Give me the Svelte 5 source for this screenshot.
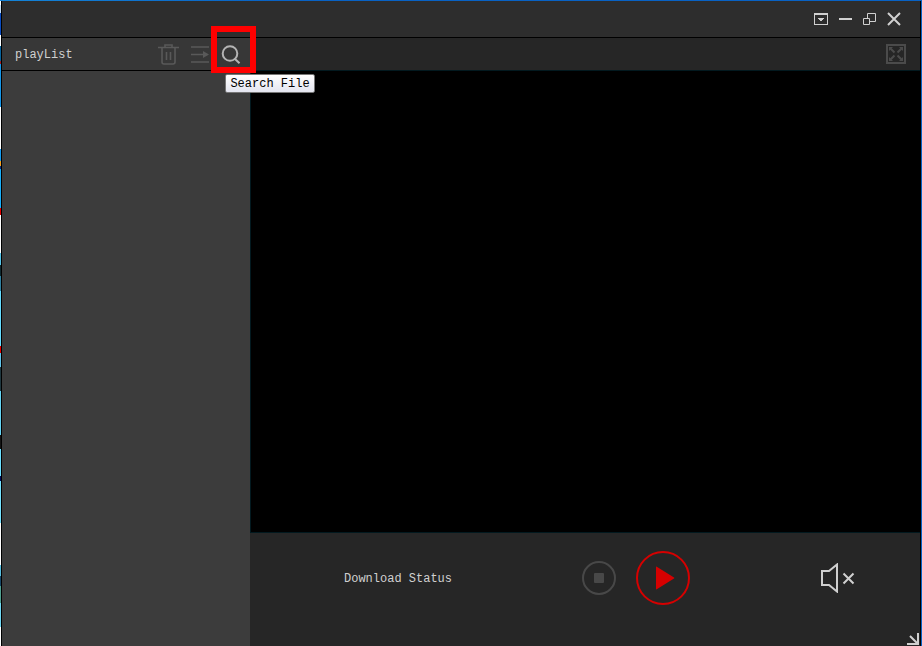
<script>
  let status = $state('Download Status');
  let files = $state([]);
</script>

<div class="desktop">
  <main class="window">
    <header class="titlebar">
      <button aria-label="Menu">
        <svg width="14" height="12" viewBox="0 0 14 12" shape-rendering="crispEdges">
          <path d="M.5 1v10.5h13V1" fill="none" stroke="#d0d0d0" />
          <path d="M0 0h14v2H0zM4 5h6v1H4zM5 6h4v1H5zM6 7h2v1H6z" fill="#d0d0d0" />
        </svg>
      </button>
      <button aria-label="Minimize">
        <svg width="13" height="12" viewBox="0 0 13 12"><path d="M0 5h13v2H0z" fill="#d0d0d0" /></svg>
      </button>
      <button aria-label="Restore">
        <svg width="13" height="12" viewBox="0 0 13 12" fill="none" stroke="#d0d0d0">
          <path d="M4.500 5V.5h8v8H7M.5 5.500h6v6h-6z" />
        </svg>
      </button>
      <button aria-label="Close">
        <svg width="14" height="14" viewBox="0 0 14 14"><path d="M1 1l12 12M13 1L1 13" stroke="#d0d0d0" stroke-width="2" /></svg>
      </button>
    </header>

    <div class="body">
      <aside class="sidebar">
        <div class="toolbar">
          <h1>playList</h1>
          <button aria-label="Delete">
            <svg width="21" height="22" viewBox="0 0 21 22" fill="none" stroke="#595959" stroke-width="1.600">
              <path d="M0 4.500h21M7 4V2h7v2M4 5v14q0 2 2 2h9q2 0 2-2V5M8.500 9v8M12.500 9v8" />
            </svg>
          </button>
          <button aria-label="Play order">
            <svg width="18" height="18" viewBox="0 0 18 18">
              <path d="M0 2h18M0 9.500h14M0 17h18" stroke="#595959" stroke-width="1.600" />
              <path d="M12 6l6 3.500-6 3.500z" fill="#595959" />
            </svg>
          </button>
          <div class="search">
            <button aria-label="Search File" aria-describedby="search-tip">
              <svg width="20" height="20" viewBox="0 0 20 20" fill="none" stroke="#b4b4b4" stroke-width="2">
                <circle cx="9" cy="9.500" r="7.300" /><path d="M13.500 14.500l5 4.700" />
              </svg>
            </button>
            <span class="marker"></span>
            <span class="tip" id="search-tip" role="tooltip">Search File</span>
          </div>
        </div>
        <ul class="files">
          {#each files as file}<li>{file}</li>{/each}
        </ul>
      </aside>

      <section class="player">
        <div class="toolbar viewbar">
          <button aria-label="Full screen">
            <svg width="20" height="20" viewBox="0 0 20 20" fill="none" stroke="#4b4b4b">
              <path d="M1 1h18v18H1z" stroke-width="2" />
              <path d="M4 4l4.500 4.500M16 4l-4.500 4.500M4 16l4.500-4.500M16 16l-4.500-4.500" stroke-width="2" />
              <path d="M3 3h4L3 7zM17 3v4l-4-4zM3 17v-4l4 4zM17 17h-4l4-4z" fill="#4b4b4b" stroke="none" />
            </svg>
          </button>
        </div>
        <div class="screen"></div>
        <footer class="controls">
          <span class="status">{status}</span>
          <div class="transport">
            <button aria-label="Stop">
              <svg width="34" height="34" viewBox="0 0 34 34">
                <circle cx="17" cy="17" r="16" fill="none" stroke="#484848" stroke-width="2" />
                <rect x="12" y="12" width="10" height="10" rx="1" fill="#484848" />
              </svg>
            </button>
            <button aria-label="Play">
              <svg width="54" height="54" viewBox="0 0 54 54">
                <circle cx="27" cy="27" r="26" fill="none" stroke="#d60000" stroke-width="2" />
                <path d="M20 16.500q0-1.500 1.200-.6L38 26.400q.8.6 0 1.200L21.200 38.100Q20 39 20 37.500z" fill="#d60000" />
              </svg>
            </button>
          </div>
          <button class="mute" aria-label="Mute">
            <svg width="34" height="30" viewBox="0 0 34 30" fill="none" stroke="#d0d0d0" stroke-width="2">
              <path d="M1 8h7l8-6.500v27L8 22H1z" /><path d="M22.500 10.500l10 10M32.500 10.500l-10 10" />
            </svg>
          </button>
        </footer>
      </section>
    </div>
    <span class="grip">
      <svg width="12" height="12" viewBox="0 0 12 12"><path d="M3 3l7 7M11 0v11H0" fill="none" stroke="#d0d0d0" stroke-width="2" /></svg>
    </span>
  </main>
</div>

<style>
  :global(body) { background: #000; }
  .desktop {
    box-sizing: border-box;
    height: 100vh;
    padding: 1px 1px 0;
    background:
      linear-gradient(#fff 0 4px, #c5dff5 4px 12px, #0a4cc0 12px 34px, #fff 34px 45px, #08639c 45px 60px, #a02020 60px 63px, #1596e8 63px 106px, #fff 106px 148px, #159cf0 148px 160px, #f5a020 160px 165px, #0a3080 165px 168px, #19aef8 168px 207px, #e00000 207px 214px, #fff 214px 252px, #55c4e8 252px 264px, #102a30 264px 275px, #3080a0 275px 290px, #64dcff 290px 345px, #e00000 345px 352px, #60c4ec 352px 366px, #203840 366px 390px, #64d4f4 390px 434px, #151515 434px 448px, #6adfff 448px 475px, #001060 475px 480px, #74e2ff 480px 522px, #fff 522px 564px, #57bede 564px 575px, #184868 575px 585px, #50a090 585px 602px, #70d8f4 602px 626px, #fff 626px) 0 1px / 1px 100% no-repeat,
      linear-gradient(90deg, #1484d8, #0862c4 30%);
    font: 12px/18px "Liberation Mono", monospace;
    color: #d0d0d0;
  }
  .window {
    position: relative;
    box-sizing: border-box;
    display: flex;
    flex-direction: column;
    height: 100%;
    border: solid #000;
    border-width: 0 1px;
    background: #262626;
  }
  button {
    display: flex;
    padding: 0;
    border: 0;
    background: none;
    font: inherit;
    cursor: pointer;
  }
  svg { display: block; }
  .titlebar {
    display: flex;
    align-items: center;
    justify-content: flex-end;
    gap: 11px;
    height: 36px;
    padding-right: 19px;
    border-bottom: 1px solid #000;
    background: #2d2d2d;
  }
  .body { display: flex; flex: 1; min-height: 0; }
  .sidebar { display: flex; flex-direction: column; width: 248px; background: #3c3c3c; }
  .toolbar {
    box-sizing: border-box;
    display: flex;
    align-items: center;
    gap: 12px;
    height: 33px;
    padding: 0 9px 0 13px;
    border-bottom: 1px solid #000;
    background: #373737;
  }
  h1 { flex: 1; margin: 0; padding-top: 2px; font: inherit; }
  .search { position: relative; }
  .marker {
    position: absolute;
    inset: -18px -15px -9px -10px;
    border: 6px solid #f00;
    pointer-events: none;
  }
  .tip {
    position: absolute;
    top: 30px;
    left: 4px;
    z-index: 2;
    box-sizing: border-box;
    width: 90px;
    padding-top: 1px;
    border: 1px solid #767676;
    border-radius: 2px;
    background: linear-gradient(#fff, #e4e5f0);
    color: #000;
    line-height: 16px;
    text-align: center;
    white-space: nowrap;
  }
  .files { flex: 1; margin: 0; padding: 0; list-style: none; }
  .player { display: flex; flex: 1; flex-direction: column; min-width: 0; }
  .viewbar { justify-content: flex-end; padding-right: 14px; border-color: #02191f; background: #262626; }
  .screen { flex: 1; border: solid #02191f; border-width: 0 0 1px 1px; background: #000; }
  .controls {
    display: flex;
    align-items: center;
    padding: 18px 65px 41px 94px;
  }
  .status { flex: 1; padding-top: 2px; }
  .transport { display: flex; align-items: center; gap: 20px; margin-right: 131px; }
  .grip { position: absolute; right: 1px; bottom: 1px; cursor: nwse-resize; }
</style>
